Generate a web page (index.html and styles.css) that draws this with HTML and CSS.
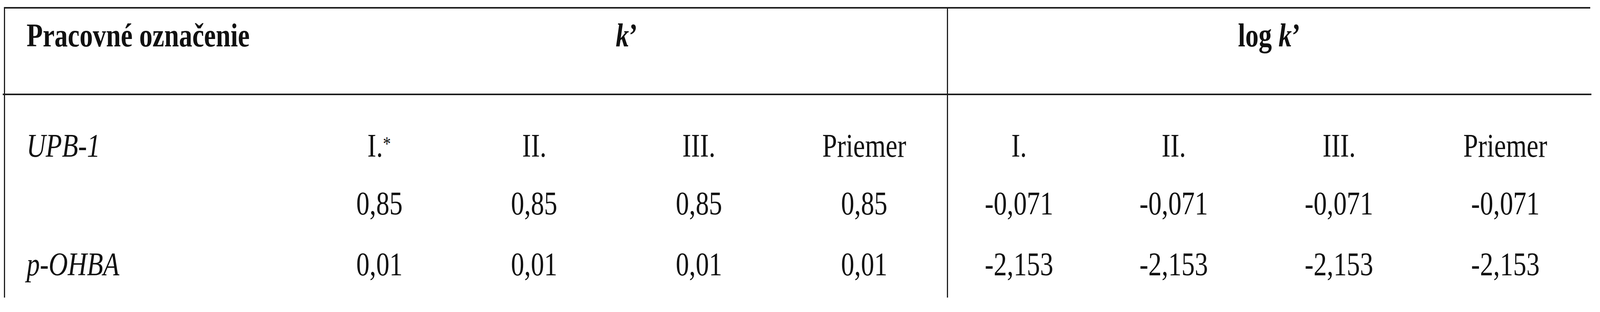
FILE: index.html
```html
<!DOCTYPE html>
<html lang="sk">
<head>
<meta charset="utf-8">
<title>Tabuľka k'</title>
<link rel="stylesheet" href="styles.css">
</head>
<body>
<div class="table">
  <div class="cell head label"><span class="t">Pracovné označenie</span></div>
  <div class="cell head center span4"><span class="t"><i>k</i>’</span></div>
  <div class="cell head center span4 divider"><span class="t">log <i>k</i>’</span></div>

  <div class="rule"></div>

  <div class="cell r1 label"><span class="t"><i>UPB-1</i></span></div>
  <div class="cell r1 center"><span class="t">I.<sup>*</sup></span></div>
  <div class="cell r1 center"><span class="t">II.</span></div>
  <div class="cell r1 center"><span class="t">III.</span></div>
  <div class="cell r1 center"><span class="t">Priemer</span></div>
  <div class="cell r1 center divider"><span class="t">I.</span></div>
  <div class="cell r1 center"><span class="t">II.</span></div>
  <div class="cell r1 center"><span class="t">III.</span></div>
  <div class="cell r1 center"><span class="t">Priemer</span></div>

  <div class="cell r2 label"></div>
  <div class="cell r2 center"><span class="t">0,85</span></div>
  <div class="cell r2 center"><span class="t">0,85</span></div>
  <div class="cell r2 center"><span class="t">0,85</span></div>
  <div class="cell r2 center"><span class="t">0,85</span></div>
  <div class="cell r2 center divider"><span class="t">-0,071</span></div>
  <div class="cell r2 center"><span class="t">-0,071</span></div>
  <div class="cell r2 center"><span class="t">-0,071</span></div>
  <div class="cell r2 center"><span class="t">-0,071</span></div>

  <div class="cell r3 label"><span class="t"><i>p-OHBA</i></span></div>
  <div class="cell r3 center"><span class="t">0,01</span></div>
  <div class="cell r3 center"><span class="t">0,01</span></div>
  <div class="cell r3 center"><span class="t">0,01</span></div>
  <div class="cell r3 center"><span class="t">0,01</span></div>
  <div class="cell r3 center divider"><span class="t">-2,153</span></div>
  <div class="cell r3 center"><span class="t">-2,153</span></div>
  <div class="cell r3 center"><span class="t">-2,153</span></div>
  <div class="cell r3 center"><span class="t">-2,153</span></div>
</div>
</body>
</html>
```
FILE: styles.css
```css
/* Horizontal unit: one pixel of the 5129px wide source, fitted to the window. */
:root {
  --u: calc(100vw / 5129);
}

html, body {
  margin: 0;
  padding: 0;
  background: #ffffff;
  overflow: hidden;
}

body {
  font-family: "Liberation Serif", "Times New Roman", serif;
  font-size: 85px;
  line-height: 100px;
  color: #111111;
}

.table {
  display: grid;
  grid-template-columns:
    calc(966 * var(--u))
    calc(466 * var(--u))
    calc(528 * var(--u))
    calc(528 * var(--u))
    calc(531 * var(--u))
    calc(458 * var(--u))
    calc(538 * var(--u))
    calc(522 * var(--u))
    calc(544 * var(--u));
  margin-top: 18px;
  margin-left: calc(13 * var(--u));
  width: max-content;
  border-top: 4px solid #1e1e1e;
  border-left: calc(4 * var(--u)) solid #1e1e1e;
}

.cell {
  box-sizing: border-box;
  white-space: nowrap;
}

/* glyphs narrowed in the same ratio as the columns */
.t {
  display: inline-block;
  transform: scaleX(0.7986);
}

.label {
  padding-left: calc(68 * var(--u));
}

.label .t {
  transform-origin: 0 50%;
}

.center {
  text-align: center;
}

.center .t {
  transform-origin: 50% 50%;
}

.span4 {
  grid-column: span 4;
}

.divider {
  border-left: calc(4 * var(--u)) solid #1e1e1e;
}

.head {
  height: 218px;
  padding-top: 18px;
  font-weight: bold;
}

.rule {
  grid-column: 1 / -1;
  height: 4px;
  background: #1e1e1e;
  margin: 0 calc(-4 * var(--u)) 0 calc(-8 * var(--u));
}

.r1 {
  height: 179px;
  padding-top: 79px;
}

.r2 {
  height: 148px;
  padding-top: 48px;
}

.r3 {
  height: 192px;
  padding-top: 56px;
}

sup {
  font-size: 0.6em;
  line-height: 0;
  vertical-align: 0.33em;
}
```
